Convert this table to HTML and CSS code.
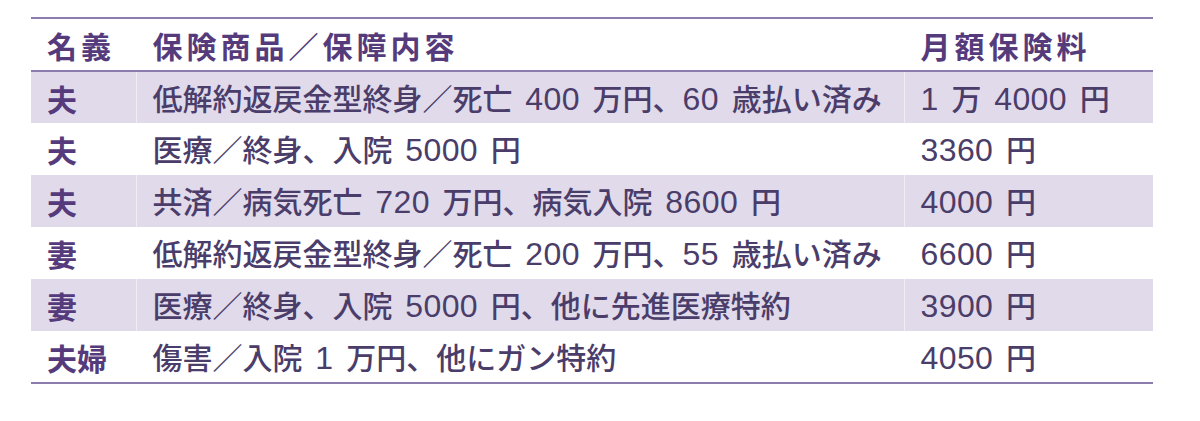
FILE: index.html
```html
<!DOCTYPE html>
<html lang="ja">
<head>
<meta charset="utf-8">
<link rel="stylesheet" href="styles.css">
</head>
<body>
<table class="ins">
  <thead>
    <tr>
      <th class="c1">名義</th>
      <th class="c2">保険商品／保障内容</th>
      <th class="c3">月額保険料</th>
    </tr>
  </thead>
  <tbody>
    <tr class="shade"><td class="c1 who">夫</td><td class="c2">低解約返戻金型終身／死亡 <span class="n">400</span> 万円、<span class="n">60</span> 歳払い済み</td><td class="c3"><span class="n">1</span> 万 <span class="n">4000</span> 円</td></tr>
    <tr><td class="c1 who">夫</td><td class="c2">医療／終身、入院 <span class="n">5000</span> 円</td><td class="c3"><span class="n">3360</span> 円</td></tr>
    <tr class="shade"><td class="c1 who">夫</td><td class="c2">共済／病気死亡 <span class="n">720</span> 万円、病気入院 <span class="n">8600</span> 円</td><td class="c3"><span class="n">4000</span> 円</td></tr>
    <tr><td class="c1 who">妻</td><td class="c2">低解約返戻金型終身／死亡 <span class="n">200</span> 万円、<span class="n">55</span> 歳払い済み</td><td class="c3"><span class="n">6600</span> 円</td></tr>
    <tr class="shade"><td class="c1 who">妻</td><td class="c2">医療／終身、入院 <span class="n">5000</span> 円、他に先進医療特約</td><td class="c3"><span class="n">3900</span> 円</td></tr>
    <tr><td class="c1 who">夫婦</td><td class="c2">傷害／入院 <span class="n">1</span> 万円、他にガン特約</td><td class="c3"><span class="n">4050</span> 円</td></tr>
  </tbody>
</table>
</body>
</html>
```
FILE: styles.css
```css
html, body {
  margin: 0;
  padding: 0;
  background: #ffffff;
}
body {
  padding: 17px 0 0 31px;
  font-family: "Noto Sans CJK JP", "Noto Sans", sans-serif;
  color: #4b3d6a;
}
.ins {
  border-collapse: collapse;
  width: 1122px;
  table-layout: fixed;
  border-top: 2px solid #8c7cad;
  border-bottom: 2px solid #8c7cad;
}
.ins th, .ins td {
  box-sizing: border-box;
  padding: 0 0 0 16px;
  text-align: left;
  white-space: nowrap;
  font-size: 30px;
  line-height: 30px;
}
.ins th {
  height: 53px;
  font-weight: 700;
  color: #553b7b;
  letter-spacing: 4px;
  border-bottom: 2px solid #8c7cad;
}
.ins td {
  height: 52px;
  font-weight: 500;
  word-spacing: 6px;
}
.n {
  font-family: "Liberation Sans", Arial, sans-serif;
  font-weight: 400;
  font-size: 32px;
  letter-spacing: 0.4px;
}
.ins td.who {
  font-weight: 700;
  color: #553b7b;
}
.c1 { width: 105px; }
.c2 { width: 768px; }
.c3 { width: 249px; }
.ins td.c2, .ins th.c2, .ins td.c3, .ins th.c3 {
  border-left: 1px solid rgba(255,255,255,0.5);
}
.shade td {
  background: #e1daeb;
}
```
